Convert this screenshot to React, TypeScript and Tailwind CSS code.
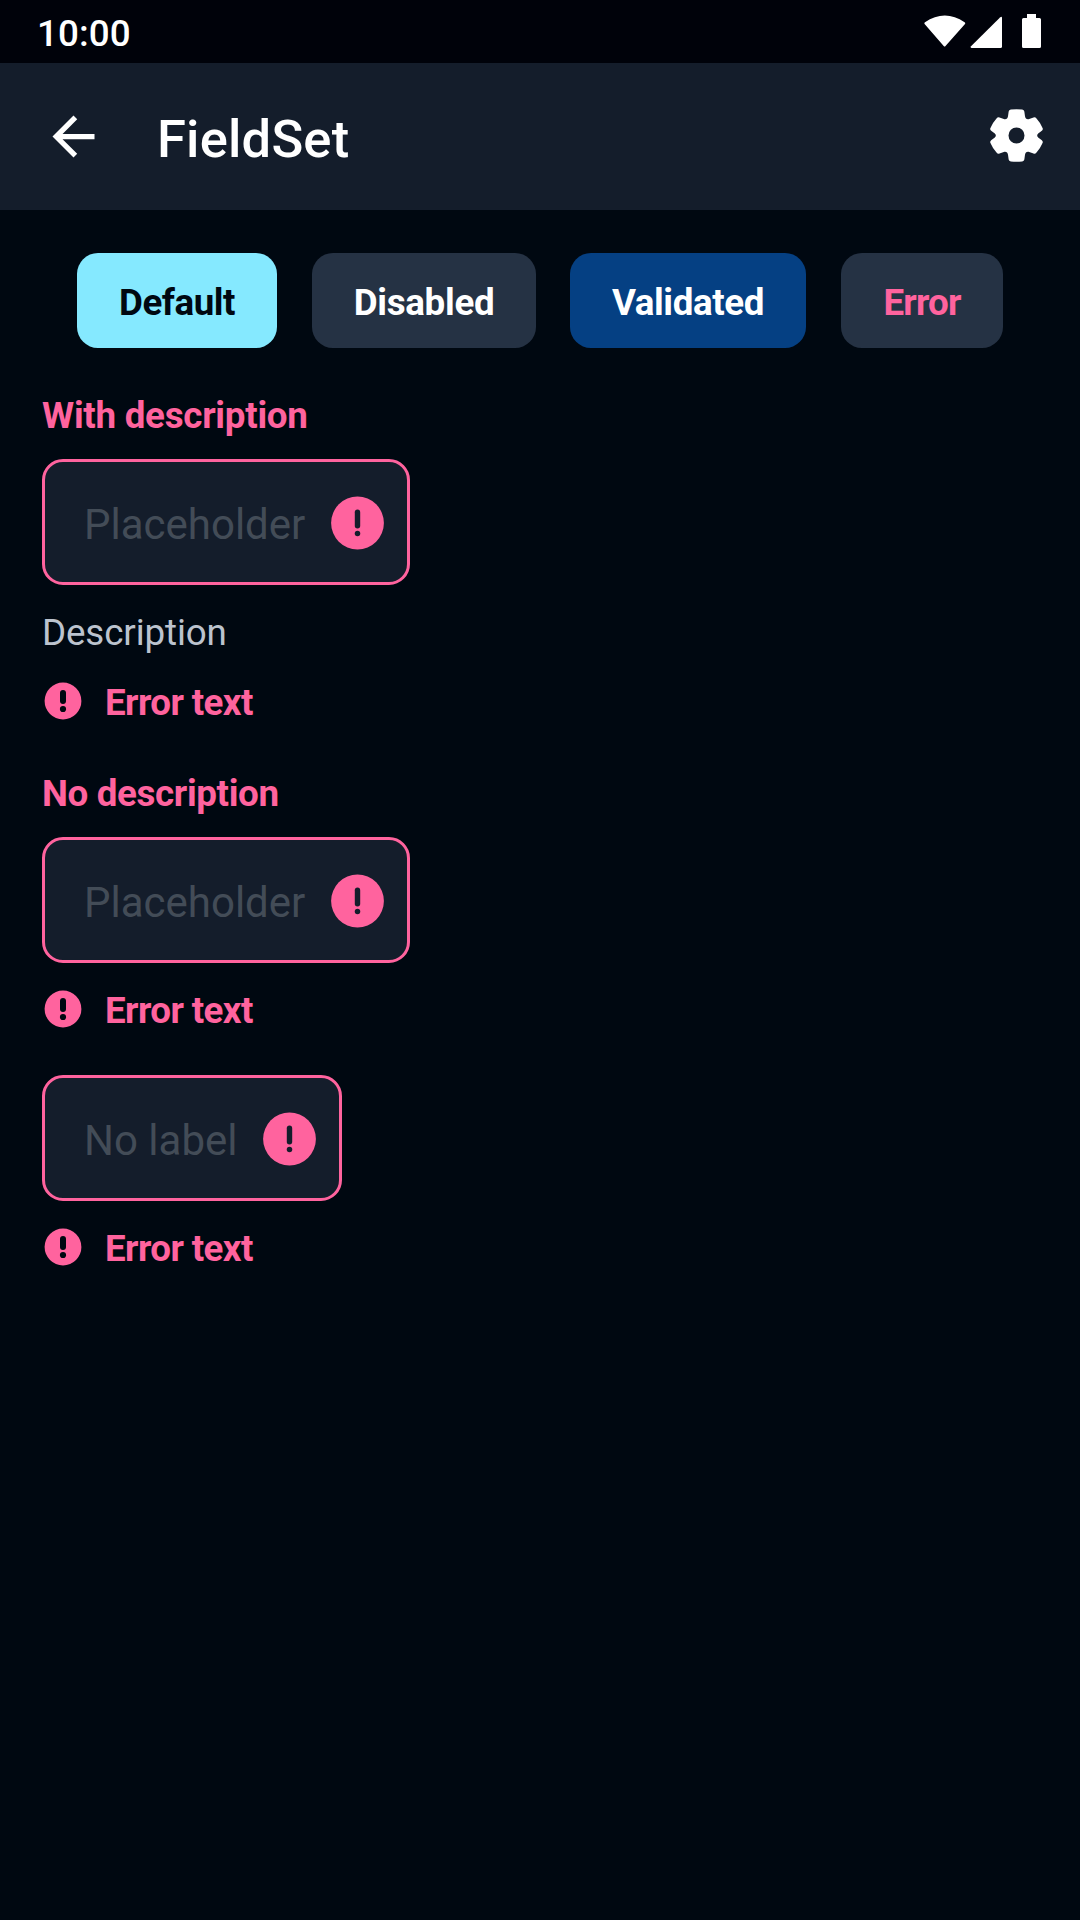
function Alert() {
  return (
    <svg width="63" height="63" viewBox="0 0 63 63" className="shrink-0">
      <circle cx="31.5" cy="32" r="26.4" fill="#ff639e" />
      <rect x="28.8" y="18.500" width="5.4" height="19" rx="2.7" fill="#141d2b" />
      <circle cx="31.5" cy="42.500" r="2.75" fill="#141d2b" />
    </svg>
  );
}

function SmallAlert() {
  return (
    <svg width="42" height="42" viewBox="0 0 42 42" className="shrink-0">
      <circle cx="21" cy="21" r="18.4" fill="#ff639e" />
      <rect x="18" y="10" width="6" height="14" rx="3" fill="#000811" />
      <circle cx="21" cy="29" r="3.1" fill="#000811" />
    </svg>
  );
}

type FieldProps = {
  label?: string;
  labelClass?: string;
  placeholder: string;
  description?: string;
  width: string;
};

function Field({ label, labelClass = '', placeholder, description, width }: FieldProps) {
  return (
    <section className="text-[36.75px] leading-[52px]">
      {label && <h2 className={`mb-[17px] pt-px font-bold text-[#ff639e] ${labelClass}`}>{label}</h2>}
      <div
        className={`flex h-[126px] ${width} items-center justify-between rounded-[21px] border-3 border-[#ff639e] bg-[#141d2b] pr-[18px] pl-[39px]`}
      >
        <span className="pt-[5px] text-[42px] whitespace-nowrap text-[#434c57]">{placeholder}</span>
        <Alert />
      </div>
      {description && (
        <p className="mt-[22px] -mb-[4px] tracking-[-0.12px] text-[#bcc3ce]">{description}</p>
      )}
      <div className="mt-5 flex h-[52px] items-center gap-[21px] text-[#ff639e]">
        <SmallAlert />
        <span className="pt-[3px] font-bold tracking-[-0.6px]">Error text</span>
      </div>
    </section>
  );
}

export default function App() {
  return (
    <div className="min-h-[1920px] w-[1080px] bg-[#000811] font-['Roboto',sans-serif] text-white">
      <div className="flex h-[63px] items-center justify-between bg-[#00020a] pr-[38px] pl-[37px]">
        <time className="pt-[5px] text-[36.75px] leading-none font-medium tracking-[0.1px]">10:00</time>
        <svg className="mt-px" width="118" height="36" viewBox="0 0 118 36" fill="white">
          <path d="M.8 10.2Q-.2 9.2 1 8.3C14 -.8 27.6 -.8 40.6 8.3Q41.8 9.2 40.8 10.2L21.5 32Q20.6 33 19.7 32Z" />
          <path d="M47.5 34Q46 34 47 32.3L76 3.5Q78 2 78 4V32.5Q78 34 76.5 34Z" />
          <path d="M103 0H112V4H115.5Q117 4 117 5.5V32.5Q117 34 115.5 34H99.5Q98 34 98 32.5V5.5Q98 4 99.5 4H103Z" />
        </svg>
      </div>
      <header className="flex h-[147px] items-center bg-[#141d2b] pr-[32px] pl-[42px]">
        <svg width="63" height="63" viewBox="0 0 24 24" fill="white">
          <path d="M20 11H7.83l5.59-5.59L12 4l-8 8 8 8 1.41-1.41L7.83 13H20v-2z" />
        </svg>
        <h1 className="ml-[52px] pt-[5px] text-[52.5px] leading-none font-medium tracking-[0.2px]">FieldSet</h1>
        <svg className="mb-[2px] ml-auto" width="63" height="63" viewBox="-94.5 -94.5 189 189">
          <path
            fillRule="evenodd"
            fill="white"
            d="M-17 -78Q0 -80 17 -78Q23 -77 23.5 -72L25.5 -58Q27 -48 36 -49L51 -54Q56 -56 60 -51Q72 -38 78.5 -22Q80 -18 76 -14L65 -6Q59 0 65 6L76 14Q80 18 78.5 22Q72 38 60 51Q56 56 51 54L36 49Q27 48 25.5 58L23.5 72Q23 77 17 78Q0 80 -17 78Q-23 77 -23.5 72L-25.5 58Q-27 48 -36 49L-51 54Q-56 56 -60 51Q-72 38 -78.5 22Q-80 18 -76 14L-65 6Q-59 0 -65 -6L-76 -14Q-80 -18 -78.5 -22Q-72 -38 -60 -51Q-56 -56 -51 -54L-36 -49Q-27 -48 -25.5 -58L-23.5 -72Q-23 -77 -17 -78ZM0 -24A24 24 0 1 0 0 24A24 24 0 1 0 0 -24Z"
          />
        </svg>
      </header>
      <div className="mt-[43px] flex h-[95px] gap-[35px] pl-[77px] text-[36.75px] font-bold">
        <button className="w-[200px] rounded-[21px] bg-[#85e9ff] pt-1 tracking-[-0.5px] text-[#000811]">Default</button>
        <button className="w-[224px] rounded-[21px] bg-[#253244] pt-1 tracking-[-0.3px]">Disabled</button>
        <button className="-ml-px w-[236px] rounded-[21px] bg-[#054083] pt-1 tracking-[-0.4px]">Validated</button>
        <button className="w-[162px] rounded-[21px] bg-[#253244] pt-1 tracking-[-0.8px] text-[#ff639e]">Error</button>
      </div>
      <main className="flex flex-col gap-10 px-[42px] pt-[41px]">
        <Field
          label="With description"
          labelClass="tracking-[-0.27px]"
          placeholder="Placeholder"
          description="Description"
          width="w-[368px]"
        />
        <Field
          label="No description"
          labelClass="tracking-[-0.36px]"
          placeholder="Placeholder"
          width="w-[368px]"
        />
        <Field placeholder="No label" width="w-[300px]" />
      </main>
    </div>
  );
}
